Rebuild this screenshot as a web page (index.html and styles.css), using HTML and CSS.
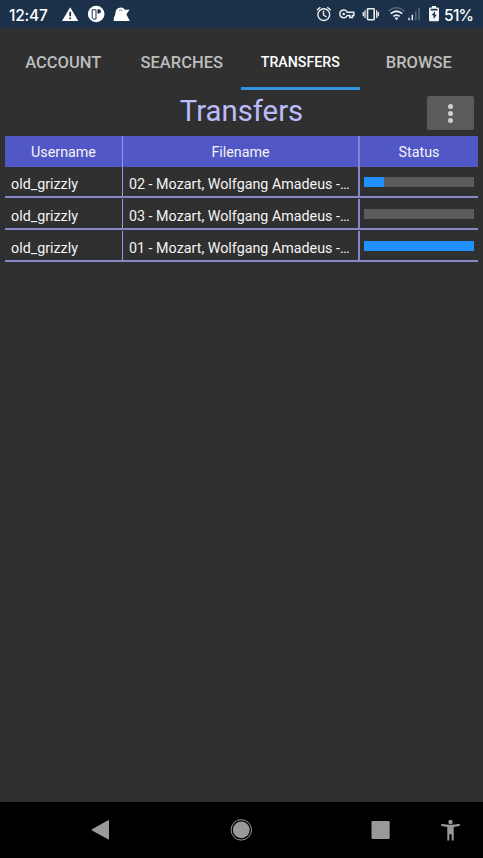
FILE: index.html
```html
<!DOCTYPE html>
<html lang="en">
<head>
<meta charset="utf-8">
<title>Transfers</title>
<link rel="stylesheet" href="styles.css">
</head>
<body>
<div class="screen">
  <header class="statusbar">
    <span class="clock">12:47</span>
    <svg class="notifications" width="72" height="28" viewBox="60 0 72 28">
      <path d="M70.200 7.200 78.300 21H62z" fill="#fff"/>
      <path d="M69.300 11.700h1.800v4.500h-1.800zM69.300 17.400h1.800v1.800h-1.800z" fill="#1b3149"/>
      <circle cx="96.200" cy="14" r="8.300" fill="#fff"/>
      <path d="M92.200 18.500V9.800h3.800v9.200h-3.300" fill="none" stroke="#1b3149" stroke-width="1"/>
      <path d="M97.500 9.300h1.300a2 2 0 0 1 0 4.200h-1.300z" fill="#1b3149"/>
      <path d="M113.700 21q-.2-3.600 1.300-6 .1-4.200 1.900-6 1.600-1.600 4.200-1.500 2.500.1 3.700 2.300h4.800l-3.200 4.400L129.800 21z" fill="#fff"/>
      <path d="M119 10.500q1.500-1.500 3.400.2" fill="none" stroke="#1b3149" stroke-width=".6"/>
    </svg>
    <svg class="indicators" width="125" height="28" viewBox="315 0 125 28" fill="none" stroke="#e9edf0" stroke-width="1.400">
      <circle cx="323.800" cy="14.600" r="5.900"/>
      <path d="M316.900 10.100l3.500-2.800M330.700 10.100l-3.500-2.800M323.500 10.700v4.300l3 2"/>
      <path d="M347.200 12.200h6.600v3.300h-1.400v2h-2.600v-2h-2.600a3.900 3.900 0 1 1 0-3.300z" stroke-width="1.500"/>
      <circle cx="343.700" cy="14" r="1.300" fill="#e9edf0" stroke="none"/>
      <rect x="367.500" y="8.700" width="6.700" height="11" rx=".6" stroke-width="1.600"/>
      <path d="M365 10.300v7.600M376.700 10.300v7.600M363.300 12v4.200M378.400 12v4.200" stroke-width="1.300"/>
      <path d="M388.500 11.200q8-7 16 0" stroke="#526477" stroke-width="1.600"/>
      <path d="M390.700 13.700q5.800-4.900 11.600 0M393.300 16.400q3.200-2.600 6.400 0" stroke-width="1.700"/>
      <path d="M394.600 18q1.900-1.500 3.800 0l-1.900 2.300z" fill="#e9edf0" stroke="none"/>
      <path d="M409 17.700v2.500M412.300 14.700v5.500" stroke-width="1.500"/>
      <path d="M415.700 11.200v9M419 7.700v12.500" stroke="#526477" stroke-width="1.700"/>
      <path d="M432 6h4v1.500h1.800q1.200 0 1.200 1.200v11.300q0 1.200-1.200 1.200h-7.600q-1.200 0-1.200-1.200V8.700q0-1.200 1.200-1.200H432z" fill="#f3f4f5" stroke="none"/>
      <path d="M430.600 8.800h6.800v1.700h-6.800z" fill="#1b3149" stroke="none"/>
      <path d="M434.900 11.300l-3.300 4h2v3.800l3.200-4.300h-1.900z" fill="#1b3149" stroke="none"/>
    </svg>
    <span class="battery">51%</span>
  </header>
  <nav class="tabs">
    <a class="tab">ACCOUNT</a>
    <a class="tab">SEARCHES</a>
    <a class="tab active">TRANSFERS</a>
    <a class="tab">BROWSE</a>
  </nav>
  <main class="content">
    <div class="heading">
      <h1>Transfers</h1>
      <button class="menu" aria-label="Menu"><i></i><i></i><i></i></button>
    </div>
    <div class="table">
      <div class="row head"><div>Username</div><div>Filename</div><div>Status</div></div>
      <div class="row"><div>old_grizzly</div><div>02 - Mozart, Wolfgang Amadeus -…</div><div><span class="progress"><b style="width:18.5%"></b></span></div></div>
      <div class="row"><div>old_grizzly</div><div>03 - Mozart, Wolfgang Amadeus -…</div><div><span class="progress"><b style="width:0%"></b></span></div></div>
      <div class="row"><div>old_grizzly</div><div>01 - Mozart, Wolfgang Amadeus -…</div><div><span class="progress"><b style="width:100%"></b></span></div></div>
    </div>
  </main>
  <footer class="navbar">
    <svg width="483" height="56" viewBox="0 802 483 56" fill="#999">
      <path d="M92 829.200 108.500 820q.5-.2.500.4v18.800q0 .6-.5.400L92 830.500q-.7-.6 0-1.300z"/>
      <circle cx="241.300" cy="829.900" r="8.400"/>
      <circle cx="241.300" cy="829.900" r="10.200" fill="none" stroke="#999" stroke-width="1"/>
      <rect x="371.500" y="821" width="18.200" height="18" rx="1.300"/>
      <circle cx="450.500" cy="822" r="2.200"/>
      <path d="M441.500 823.800q9 2 18 0l.5 2q-3 .8-6.300 1.100v13.700h-2v-6.400h-2.400v6.400h-2v-13.700q-3.300-.3-6.300-1.100z"/>
    </svg>
  </footer>
</div>
</body>
</html>
```
FILE: styles.css
```css
* { box-sizing: border-box; }
body { margin: 0; background: #303030; font-family: Roboto, sans-serif; }
.screen { width: 483px; height: 858px; display: flex; flex-direction: column; overflow: hidden; background: #303030; }
.statusbar { height: 28px; flex: none; display: flex; align-items: center; background: #1b3149; color: #fff; font: 500 15.5px/28px Inter, sans-serif; }
.statusbar svg { display: block; flex: none; }
.clock { width: 60px; padding: 3px 0 0 9px; letter-spacing: -.2px; }
.indicators { margin-left: 183px; }
.battery { padding: 3px 0 0 4px; letter-spacing: -.7px; }
.tabs { height: 62px; flex: none; display: grid; grid-template-columns: repeat(4, 1fr); padding: 0 5px 0 4px; }
.tab { text-align: center; font-size: 16.5px; font-weight: 500; line-height: 69px; color: #bdbdbd; height: 62px; }
.tab.active { color: #fff; font-size: 14.2px; line-height: 68px; border-bottom: 3px solid #3194dc; }
.content { flex: 1; padding: 0 5px; }
.heading { height: 46px; display: grid; grid-template-columns: 1fr auto 1fr; padding-right: 4px; }
h1 { grid-column: 2; margin: 0; padding-left: 4px; font-size: 29.3px; line-height: 42px; font-weight: 400; color: #bbbdfb; }
.menu { justify-self: end; margin: 6px 0 0; padding: 0; border: 0; border-radius: 2px; background: #5b5b5d; width: 47px; height: 34px; display: flex; flex-direction: column; align-items: center; justify-content: center; gap: 2px; }
.menu i { width: 5px; height: 5px; border-radius: 50%; background: #d0d0d0; }
.row { height: 32px; display: grid; grid-template-columns: 118px 237px 118px; color: #f4f4f4; font-size: 14.3px; line-height: 34px; border-bottom: 2px solid #8487c8; }
.row > div { padding-left: 6px; white-space: nowrap; overflow: hidden; }
.row > div:first-child { border-right: 1px solid #9699e2; }
.row > div:nth-child(2) { border-right: 2px solid #8487c8; }
.row:nth-child(n+3) > div { margin-top: 1px; }
.row.head { height: 31px; border-bottom: 0; background: #5157c6; line-height: 33px; text-align: center; }
.row.head > div { padding: 0; }
.row:nth-child(2) { height: 31px; }
.row .progress { display: block; height: 10px; width: 110px; margin: 10px 0 0 4px; background: #5c5c5c; }
.row > div:last-child { padding-left: 0; }
.progress b { display: block; height: 100%; background: #2190ff; }
.navbar { height: 56px; flex: none; background: #000; }
.navbar svg { display: block; }
```
